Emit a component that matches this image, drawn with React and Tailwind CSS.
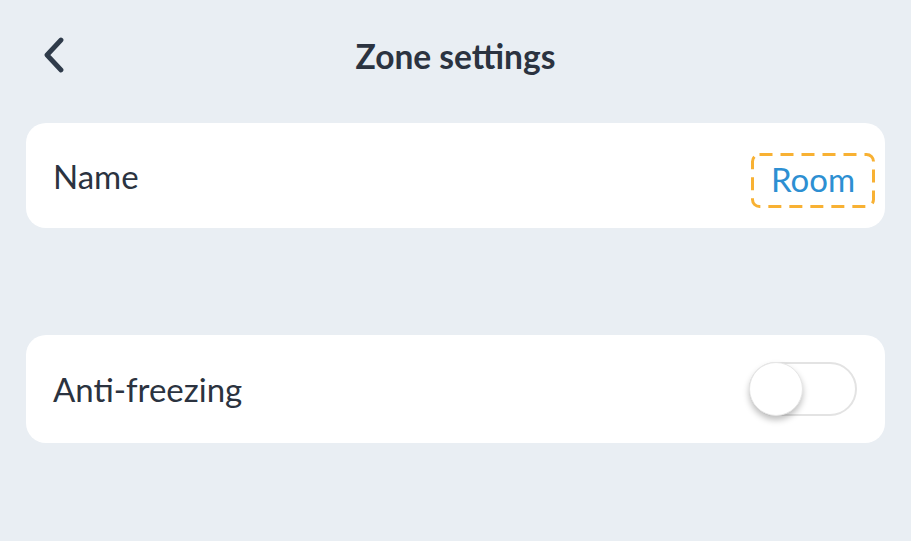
import React, { useState } from "react";

export default function App() {
  const [antiFreeze, setAntiFreeze] = useState(false);

  return (
    <div
      className="w-[911px] h-[541px] bg-[#e9eef3] text-[#2b3340] overflow-hidden"
      style={{ fontFamily: "Lato, 'Noto Sans', sans-serif" }}
    >
      {/* header */}
      <div className="relative h-[112px] flex items-center justify-center">
        <button className="absolute left-[40px] top-[35px] w-[28px] h-[40px] flex items-center justify-center text-[#2f3b4a]">
          <svg width="24" height="36" viewBox="0 0 24 36" fill="none">
            <path
              d="M19 3 L5 18 L19 33"
              stroke="currentColor"
              strokeWidth="4.8"
              strokeLinecap="round"
              strokeLinejoin="round"
            />
          </svg>
        </button>
        <h1 className="text-[33.5px] font-bold leading-none mt-[2px]">Zone settings</h1>
      </div>

      <div className="px-[26px]">
        {/* name row */}
        <div className="bg-white rounded-[20px] h-[105px] flex items-center justify-between pl-[27px] pr-[10px] mt-[11px]">
          <span className="text-[33px] leading-none mt-[2px]">Name</span>
          <span className="relative text-[33px] leading-none text-[#2d8fd2] w-[124px] h-[55px] mt-[10px] flex items-center justify-center">
            <svg className="absolute inset-0" width="124" height="55" viewBox="0 0 124 55" fill="none">
              <rect
                x="1.5"
                y="1.5"
                width="121"
                height="52"
                rx="7"
                stroke="#f8b133"
                strokeWidth="3"
                strokeDasharray="13 8"
              />
            </svg>
            <span className="relative -mt-[2px]">Room</span>
          </span>
        </div>

        {/* anti-freezing row */}
        <div className="bg-white rounded-[20px] h-[108px] flex items-center justify-between pl-[27px] pr-[28px] mt-[107px]">
          <span className="text-[33px] leading-none">Anti-freezing</span>
          <button
            onClick={() => setAntiFreeze(!antiFreeze)}
            className={`relative w-[108px] h-[54px] rounded-full border-2 ${
              antiFreeze ? "bg-[#2d8fd2] border-[#2d8fd2]" : "bg-white border-[#e3e3e3]"
            }`}
          >
            <span
              className={`absolute top-[-2px] ${
                antiFreeze ? "left-[52px]" : "left-[-2px]"
              } w-[54px] h-[54px] rounded-full bg-white shadow-[0_4px_6px_rgba(0,0,0,0.25)] border border-[#e6e6e6]`}
            />
          </button>
        </div>
      </div>
    </div>
  );
}
